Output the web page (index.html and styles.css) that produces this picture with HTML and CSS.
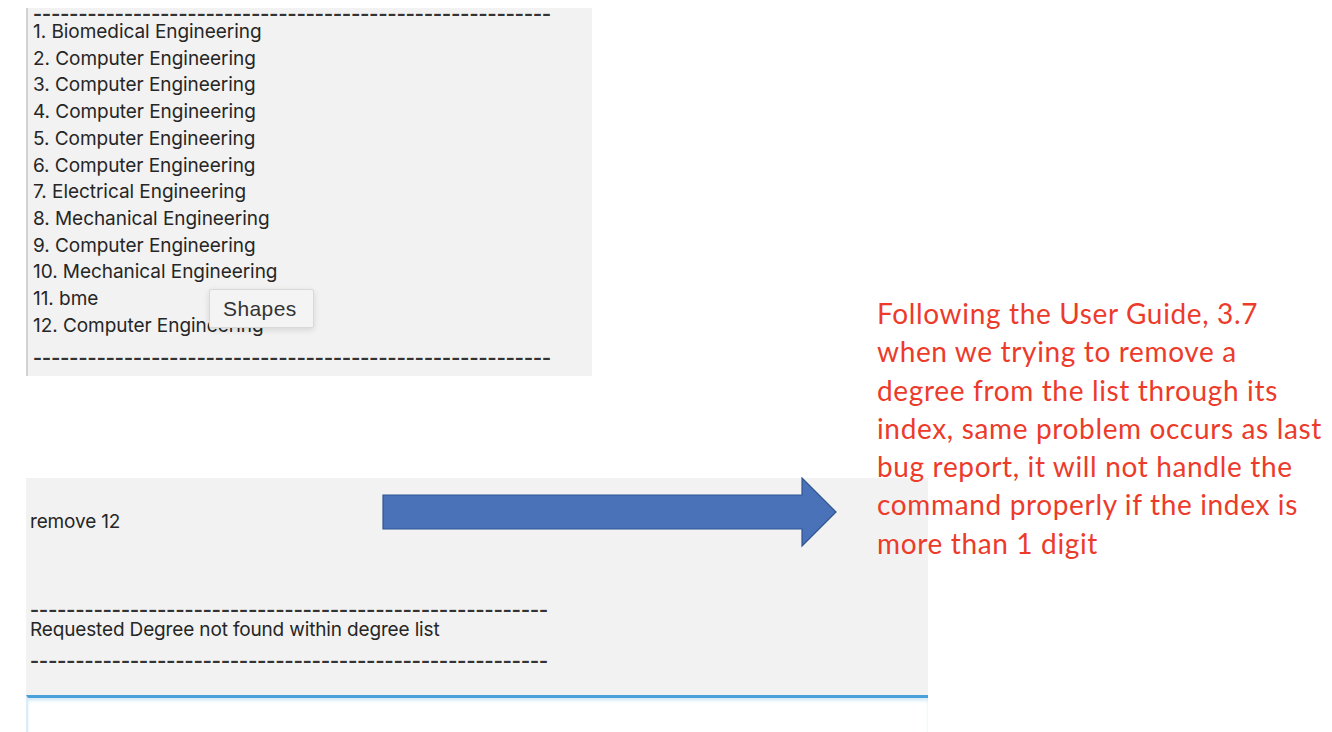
FILE: index.html
```html
<!DOCTYPE html>
<html>
<head>
<meta charset="utf-8">
<link rel="stylesheet" href="styles.css">
</head>
<body>
<div class="canvas">
  <section class="panel top-panel">
    <div class="dashes dash-top">---------------------------------------------------------</div>
    <ol class="degrees">
      <li>1. Biomedical Engineering</li>
      <li>2. Computer Engineering</li>
      <li>3. Computer Engineering</li>
      <li>4. Computer Engineering</li>
      <li>5. Computer Engineering</li>
      <li>6. Computer Engineering</li>
      <li>7. Electrical Engineering</li>
      <li>8. Mechanical Engineering</li>
      <li>9. Computer Engineering</li>
      <li>10. Mechanical Engineering</li>
      <li>11. bme</li>
      <li>12. Computer Engineering</li>
    </ol>
    <div class="dashes dash-bottom">---------------------------------------------------------</div>
    <div class="tooltip">Shapes</div>
  </section>

  <section class="panel bottom-panel">
    <div class="command">remove 12</div>
    <div class="dashes dash-r1">---------------------------------------------------------</div>
    <div class="response">Requested Degree not found within degree list</div>
    <div class="dashes dash-r2">---------------------------------------------------------</div>
    <div class="input-field"></div>
    <svg class="arrow" width="456" height="71" viewBox="0 0 456 71">
      <polygon points="1,18 420,18 420,1 454,35 420,69 420,52 1,52" fill="#4a72b9" stroke="#2f5491" stroke-width="1.2"/>
    </svg>
  </section>

  <p class="note">Following the User Guide, 3.7<br>when we trying to remove a<br>degree from the list through its<br>index, same problem occurs as last<br>bug report, it will not handle the<br>command properly if the index is<br>more than 1 digit</p>
</div>
</body>
</html>
```

FILE: styles.css
```css
html, body {
  margin: 0;
  padding: 0;
  background: #ffffff;
}

.canvas {
  position: relative;
  width: 1332px;
  height: 732px;
  overflow: hidden;
  padding-top: 8px;
  box-sizing: border-box;
}

.panel {
  font-family: "Inter", "Liberation Sans", sans-serif;
  color: #262626;
  background: #f2f2f2;
}

.top-panel {
  position: relative;
  margin-left: 26px;
  width: 566px;
  height: 368px;
  box-sizing: border-box;
  border-left: 2px solid #d2d2d2;
  padding-left: 5px;
  padding-top: 1px;
}

.dashes {
  white-space: nowrap;
  font-family: "Liberation Sans", sans-serif;
  font-size: 27px;
  letter-spacing: 0.1px;
  color: #333333;
  line-height: 12px;
  height: 12px;
}

.dash-top {
  margin-top: -2px;
}

.degrees {
  list-style: none;
  margin: 0;
  padding: 0;
  font-size: 19px;
  letter-spacing: -0.05px;
  line-height: 26.7px;
}

.dash-bottom {
  margin-top: 12px;
}

.tooltip {
  position: absolute;
  left: 181px;
  top: 281px;
  width: 105px;
  height: 39px;
  box-sizing: border-box;
  border: 1px solid #d9d9d9;
  border-radius: 2px;
  background: #f4f4f4;
  box-shadow: 0 2px 6px rgba(0, 0, 0, 0.12);
  font-family: "Liberation Sans", "Helvetica", sans-serif;
  font-size: 21px;
  letter-spacing: 0.4px;
  color: #333333;
  padding-left: 13px;
  line-height: 37px;
}

.bottom-panel {
  position: relative;
  margin-left: 26px;
  margin-top: 102px;
  width: 902px;
  height: 254px;
  display: flex;
  flex-direction: column;
  padding-left: 4px;
  box-sizing: border-box;
}

.command {
  font-size: 19px;
  letter-spacing: -0.15px;
  line-height: 24px;
  margin-top: 32px;
}

.dash-r1 {
  margin-top: 69px;
}

.response {
  font-size: 19px;
  letter-spacing: -0.15px;
  line-height: 24px;
  margin-top: 3px;
}

.dash-r2 {
  margin-top: 12px;
}

.input-field {
  margin-top: auto;
  margin-left: -4px;
  height: 34px;
  background: #ffffff;
  border-top: 3px solid #4aa0d8;
  border-left: 2px solid #dbecf7;
  box-shadow: inset 0 3px 3px #d9ecf8;
}

.arrow {
  position: absolute;
  left: 356px;
  top: -1px;
}

.note {
  position: absolute;
  left: 877px;
  top: 294px;
  margin: 0;
  font-family: "Lato", "Open Sans", sans-serif;
  font-size: 28px;
  letter-spacing: 0.65px;
  line-height: 38.3px;
  color: #ec3b2b;
}
```
